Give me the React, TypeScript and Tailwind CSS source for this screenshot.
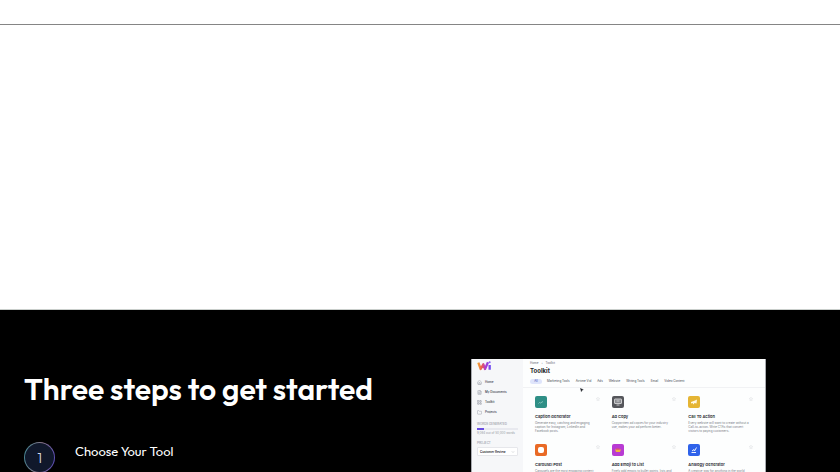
import type { ReactNode } from 'react';
import { FileText, House, LayoutGrid, Folder, ChevronDown, Star } from 'lucide-react';

const navItems = [
  { label: 'Home', icon: House },
  { label: 'My Documents', icon: FileText },
  { label: 'Toolkit', icon: LayoutGrid },
  { label: 'Projects', icon: Folder },
];

const tabs = ['Marketing Tools', 'Airtime Vid', 'Ads', 'Website', 'Writing Tools', 'Email', 'Video Content'];

const tools: { title: string; description: string; tile: string; glyph: ReactNode }[] = [
  {
    title: 'Caption Generator',
    description: 'Generate easy, catching and engaging caption for Instagram, LinkedIn and Facebook posts.',
    tile: 'bg-[#2f8f86]',
    glyph: <path d="M7 15l2-2 2 1 5-3" stroke="#9bd0ca" strokeWidth="1.5" fill="none" />,
  },
  {
    title: 'Ad Copy',
    description: 'Copywritten ad copies for your industry use, makes your ad perform better.',
    tile: 'bg-[#55565b]',
    glyph: (
      <>
        <rect x="5" y="6" width="14" height="9" rx="1" fill="#8b8c90" stroke="#e8e8ea" strokeWidth="1.5" />
        <path d="M9 18h6M9 10h6" stroke="#e8e8ea" strokeWidth="1.5" />
      </>
    ),
  },
  {
    title: 'Call To Action',
    description: 'Every website will want to create without a Call-to-action. Write CTAs that convert visitors to paying customers.',
    tile: 'bg-[#e5b534]',
    glyph: <path d="M6 12l8-3 4-2-1 8-4-1-2 3-2-3-3 1z" fill="#fff8e4" />,
  },
  {
    title: 'Carousel Post',
    description: 'Carousels are the most engaging content posts on social media.',
    tile: 'bg-[#e96a25]',
    glyph: <rect x="6" y="6" width="12" height="12" rx="4" fill="#ffffff" />,
  },
  {
    title: 'Add Emoji to List',
    description: 'Finely add emojis to bullet points, lists and more to stand out.',
    tile: 'bg-[#b83bd3]',
    glyph: (
      <>
        <path d="M6 11h12l-2 5H8z" fill="#f1b53f" />
        <path d="M8 10h7" stroke="#df5a55" strokeWidth="2" />
      </>
    ),
  },
  {
    title: 'Analogy Generator',
    description: 'A creative way for anything in the world that makes sense.',
    tile: 'bg-[#2f62ea]',
    glyph: <path d="M7 17h9M8 14l4-3 1 3 4-7" stroke="#eaf0ff" strokeWidth="2" fill="none" />,
  },
];

function Logo() {
  return (
    <svg viewBox="0 0 42 30" className="h-[10px] w-[14px]" fill="none" aria-label="WAi">
      <defs>
        <linearGradient id="logo" x1="0" y1="0" x2="42" y2="0" gradientUnits="userSpaceOnUse">
          <stop offset="0" stopColor="#f6b22b" />
          <stop offset="0.35" stopColor="#ea5a52" />
          <stop offset="0.6" stopColor="#b03bd0" />
          <stop offset="1" stopColor="#6a4df4" />
        </linearGradient>
      </defs>
      <path d="M4 5l7 19 8-14 5 14 9-20M38 12v14" stroke="url(#logo)" strokeWidth="7" strokeLinejoin="round" />
      <circle cx="38" cy="4" r="3" fill="#8b5cf6" />
    </svg>
  );
}

function Sidebar() {
  return (
    <aside className="flex w-[51px] shrink-0 flex-col bg-[#f6f7f9] px-[5px] pt-[2px]">
      <Logo />
      <nav className="mt-[6px] flex flex-col">
        {navItems.map(({ label, icon: Icon }) => (
          <a key={label} href="#" className="flex h-[10px] items-center gap-[3px] text-[3px] leading-[4px] font-medium whitespace-nowrap text-[#30343f]">
            <Icon size={5} strokeWidth={2} className="text-[#858a96]" />
            {label}
          </a>
        ))}
      </nav>
      <p className="mt-[5px] text-[3px] leading-[4px] whitespace-nowrap text-[#858996]">WORDS GENERATED</p>
      <div className="mt-[2px] h-[2px] bg-[#e8e9ef]">
        <div className="h-full w-[7px] bg-[#6a4de0]" />
      </div>
      <p className="mt-[1px] text-[3px] leading-[4px] whitespace-nowrap text-[#9599a3]">9,064 out of 50,000 words</p>
      <p className="mt-[6px] text-[3px] leading-[4px] text-[#858996]">PROJECT</p>
      <button className="mt-[2px] flex h-[9px] items-center justify-between rounded-[1px] border border-[#e6e7eb] bg-white px-[2px] text-[3px] leading-[4px] font-semibold whitespace-nowrap text-[#22252d]">
        Customer Review
        <ChevronDown size={4} className="text-[#9a9da6]" />
      </button>
    </aside>
  );
}

function ToolkitPreview() {
  return (
    <div className="flex h-[221px] overflow-hidden border-x border-[#a9abb0] bg-[#fdfefe] font-['Inter',sans-serif]">
      <Sidebar />
      <div className="relative min-w-0 flex-1">
        <div className="border-b border-[#f1f2f4] pt-[2px] pb-[3px] pl-[7px]">
          <p className="flex gap-[3px] text-[3px] leading-[4px] text-[#60646e]">
            <span>Home</span>
            <span>›</span>
            <span>Toolkit</span>
          </p>
          <h3 className="mt-[2px] text-[6px] leading-[8px] font-bold text-[#1c1f27]">Toolkit</h3>
          <div className="mt-[4px] flex items-center gap-[6px] text-[3px] leading-[5px] whitespace-nowrap text-[#444852]">
            <button className="-mr-[1px] w-[12px] rounded-full bg-[#dfe5fb] text-[#3f55b5]">All</button>
            {tabs.map((tab) => (
              <button key={tab}>{tab}</button>
            ))}
          </div>
        </div>
        {/* Mouse pointer */}
        <svg viewBox="0 0 12 12" className="absolute top-[29px] left-[57px] size-[4px]">
          <path d="M1 1l9 4-4 2-2 4z" fill="#20232b" stroke="#20232b" />
        </svg>
        <div className="grid grid-cols-3 pt-[8px] pl-[12px]">
          {tools.map((tool) => (
            <article key={tool.title} className="h-[48px]">
              <div className="flex justify-between pr-[12px]">
                <div className={`size-[12px] rounded-[2px] ${tool.tile}`}>
                  <svg viewBox="0 0 24 24" className="size-full">{tool.glyph}</svg>
                </div>
                <Star size={4} className="mt-[1px] text-[#c7cad1]" />
              </div>
              <h4 className="mt-[6px] text-[4px] leading-[5px] font-semibold whitespace-nowrap text-[#20232b]">{tool.title}</h4>
              <p className="mt-[2px] w-[62px] text-[3px] leading-[4px] text-[#777b84]">{tool.description}</p>
            </article>
          ))}
        </div>
      </div>
    </div>
  );
}

export default function App() {
  return (
    <div className="flex h-screen flex-col overflow-hidden bg-white font-['Outfit','Lato',sans-serif]">
      <header className="h-[25px] shrink-0 border-b border-[#858585]" />
      <main className="flex-1">
        <section className="h-[285px] border-b border-[#c9cecb]" />
        <section className="grid grid-cols-[1fr_295px] bg-black pt-[49px] pr-[74px] pb-16 pl-6 text-white">
          <div>
            <h2 className="mt-[10px] text-[30px] leading-[40px] font-semibold">Three steps to get started</h2>
            <ol className="mt-[33px]">
              <li className="flex gap-5">
                <span className="flex size-[31px] shrink-0 rounded-full bg-[linear-gradient(100deg,#3e8794,#8b778a_50%,#5547bd)] p-px">
                  <span className="flex flex-1 items-center justify-center rounded-full bg-[#10182b] text-[14px] leading-[18px] font-light text-[#d5dae5]">
                    1
                  </span>
                </span>
                <h3 className="text-[13px] leading-[18px] font-normal">Choose Your Tool</h3>
              </li>
            </ol>
          </div>
          <ToolkitPreview />
        </section>
      </main>
    </div>
  );
}
